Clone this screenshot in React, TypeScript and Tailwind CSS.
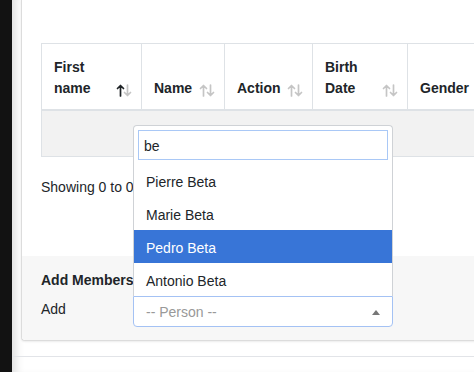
import React from "react";

const font = "font-['Liberation_Sans',Arial,sans-serif]";

function SortIcon({ active }: { active?: boolean }) {
  return (
    <svg width="16" height="13" viewBox="0 0 16 13" className="shrink-0 mb-[2px]">
      <g fill="none" strokeWidth="1.7" strokeLinecap="round" strokeLinejoin="round">
        <path d="M4.5 12V1.5M1.5 4.5l3-3 3 3" stroke={active ? "#1f2326" : "#c5c5c5"} />
        <path d="M11.5 1V11.5M8.5 8.5l3 3 3-3" stroke="#c5c5c5" />
      </g>
    </svg>
  );
}

const columns = [
  { label: ["First", "name"], w: "w-[100px]", active: true },
  { label: ["Name"], w: "w-[83px]" },
  { label: ["Action"], w: "w-[88px]" },
  { label: ["Birth", "Date"], w: "w-[95px]" },
  { label: ["Gender"], w: "w-[140px]", noIcon: true },
];

const options = ["Pierre Beta", "Marie Beta", "Pedro Beta", "Antonio Beta"];

export default function App() {
  return (
    <div className={`relative flex h-[372px] w-[474px] overflow-hidden bg-white text-[14px] text-[#212529] ${font}`}>
      {/* dark sidebar edge */}
      <div className="w-[12px] shrink-0 bg-[#121212]" />

      <div className="flex flex-1 flex-col bg-white shadow-[inset_9px_0_8px_-5px_rgba(0,0,0,0.13)]">
        {/* card */}
        <div className="ml-[9px] flex w-[520px] shrink-0 flex-col rounded-b-[4px] border-l border-b border-[#dcdcdc] bg-white shadow-[0_1px_2px_rgba(0,0,0,0.08)]">
          <div className="h-[256px] pl-[19px] pt-[43px]">
            {/* table */}
            <div className="border-t border-l border-[#dee2e6]">
              <div className="flex h-[67px] border-b-2 border-[#dee2e6]">
                {columns.map((c, i) => (
                  <div
                    key={i}
                    className={`${c.w} flex shrink-0 items-end justify-between border-r border-[#dee2e6] pb-[10px] pl-[12px] pr-[9px] font-bold leading-[21px]`}
                  >
                    <div>
                      {c.label.map((l) => (
                        <div key={l}>{l}</div>
                      ))}
                    </div>
                    {!c.noIcon && <SortIcon active={c.active} />}
                  </div>
                ))}
              </div>
              <div className="h-[46px] border-b border-[#dee2e6] bg-[#f2f2f2]" />
            </div>
            <div className="mt-[20px] leading-[20px]">Showing 0 to 0 of 0 entries</div>
          </div>

          {/* card footer */}
          <div className="h-[84px] rounded-b-[4px] bg-[#f7f7f7] pl-[19px] pt-[14px]">
            <div className="font-bold leading-[20px]">Add Members</div>
            <div className="mt-[9px] leading-[20px]">Add</div>
          </div>
        </div>

        <div className="mt-[15px] border-t border-[#e2e4e8]" />
      </div>

      {/* select2 dropdown (opened above) */}
      <div className="absolute left-[133px] top-[125px] w-[260px]">
        <div className="rounded-t-[4px] border border-b-0 border-[#cfd2d6] bg-white">
          <div className="p-[4px]">
            <div className="flex h-[30px] items-center border border-[#a9c8f6] px-[5px] pt-[2px]">be</div>
          </div>
          <ul>
            {options.map((o) => (
              <li
                key={o}
                className={`flex h-[33px] items-center pl-[12px] pt-[3px] ${
                  o === "Pedro Beta" ? "bg-[#3875d7] text-white" : ""
                }`}
              >
                {o}
              </li>
            ))}
          </ul>
        </div>
        <div className="flex h-[31px] items-center justify-between rounded-b-[4px] border border-[#a4c2f4] bg-white pl-[12px] pr-[11px] pt-[1px] text-[#999]">
          <span>-- Person --</span>
          <svg width="8" height="5" viewBox="0 0 8 5" className="mr-[1px]">
            <path d="M0 5L4 0L8 5Z" fill="#777" />
          </svg>
        </div>
      </div>
    </div>
  );
}
